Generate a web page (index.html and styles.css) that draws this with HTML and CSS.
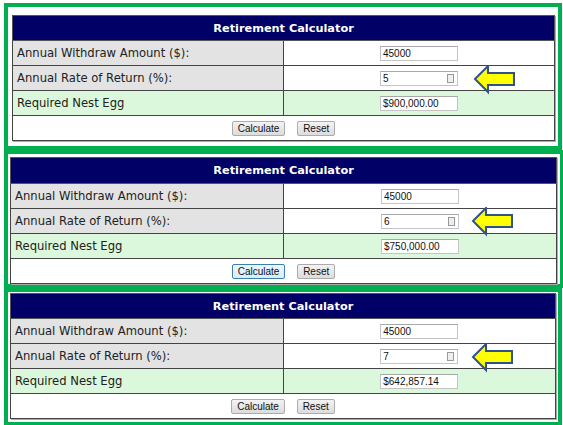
FILE: index.html
```html
<!DOCTYPE html>
<html lang="en">
<head>
    <meta charset="UTF-8">
    <title>Retirement Calculator</title>
    <link rel="stylesheet" href="styles.css">
</head>
<body>

<!-- Three snapshots of the same calculator -->
<div class="panel panel-one">
    <div class="calc">
        <table class="calc-table">
            <tr><th colspan="2">Retirement Calculator</th></tr>
            <tr>
                <td class="label">Annual Withdraw Amount ($):</td>
                <td class="field"><input class="box" type="text" value="45000"></td>
            </tr>
            <tr>
                <td class="label">Annual Rate of Return (%):</td>
                <td class="field"><span class="spin-wrap"><input class="box" type="text" value="5"><span class="spin"></span></span></td>
            </tr>
            <tr class="result">
                <td>Required Nest Egg</td>
                <td class="field"><input class="box" type="text" value="$900,000.00"></td>
            </tr>
            <tr>
                <td colspan="2" class="actions">
                    <button class="btn">Calculate</button>
                    <button class="btn">Reset</button>
                </td>
            </tr>
        </table>
        <svg class="arrow" width="44" height="30" viewBox="0 0 44 30">
            <polygon points="2,14 15,1 15,8 41,8 41,20 15,20 15,27" />
        </svg>
    </div>
</div>

<div class="panel panel-two">
    <div class="calc">
        <table class="calc-table">
            <tr><th colspan="2">Retirement Calculator</th></tr>
            <tr>
                <td class="label">Annual Withdraw Amount ($):</td>
                <td class="field"><input class="box" type="text" value="45000"></td>
            </tr>
            <tr>
                <td class="label">Annual Rate of Return (%):</td>
                <td class="field"><span class="spin-wrap"><input class="box" type="text" value="6"><span class="spin"></span></span></td>
            </tr>
            <tr class="result">
                <td>Required Nest Egg</td>
                <td class="field"><input class="box" type="text" value="$750,000.00"></td>
            </tr>
            <tr>
                <td colspan="2" class="actions">
                    <button class="btn btn-hover">Calculate</button>
                    <button class="btn">Reset</button>
                </td>
            </tr>
        </table>
        <svg class="arrow" width="44" height="30" viewBox="0 0 44 30">
            <polygon points="2,14 15,1 15,8 41,8 41,20 15,20 15,27" />
        </svg>
    </div>
</div>

<div class="panel panel-three">
    <div class="calc">
        <table class="calc-table">
            <tr><th colspan="2">Retirement Calculator</th></tr>
            <tr>
                <td class="label">Annual Withdraw Amount ($):</td>
                <td class="field"><input class="box" type="text" value="45000"></td>
            </tr>
            <tr>
                <td class="label">Annual Rate of Return (%):</td>
                <td class="field"><span class="spin-wrap"><input class="box" type="text" value="7"><span class="spin"></span></span></td>
            </tr>
            <tr class="result">
                <td>Required Nest Egg</td>
                <td class="field"><input class="box" type="text" value="$642,857.14"></td>
            </tr>
            <tr>
                <td colspan="2" class="actions">
                    <button class="btn">Calculate</button>
                    <button class="btn">Reset</button>
                </td>
            </tr>
        </table>
        <svg class="arrow" width="44" height="30" viewBox="0 0 44 30">
            <polygon points="2,14 15,1 15,8 41,8 41,20 15,20 15,27" />
        </svg>
    </div>
</div>

</body>
</html>
```

FILE: styles.css
```css
body {
    margin: 0;
    padding: 3px 0 0 4px;
    background: #fff;
    font-family: 'DejaVu Sans', Verdana, sans-serif;
    color: #222;
}
.panel {
    border: 4px solid #00b050;
}
.panel-one {
    width: 543px;
    padding: 8px 3px 5px 4px;
}
.panel-two {
    width: 547px;
    padding: 3px 3px 0 2px;
}
.panel-three {
    width: 546px;
    padding: 1px 2px 3px 2px;
}
.calc {
    position: relative;
}
.calc-table {
    width: 100%;
    border-collapse: collapse;
    border: 1px solid #555;
    box-shadow: 1px 1px 0 #aaa;
}
.calc-table th {
    height: 24px;
    padding: 0;
    background: #000066;
    color: #fff;
    font-size: 11.3px;
    font-weight: bold;
    border: 1px solid #555;
}
.panel-two .calc-table th {
    height: 25px;
}
.calc-table td {
    height: 24px;
    padding: 0 0 0 4px;
    border: 1px solid #444;
    font-size: 11.6px;
    width: 50%;
}
.calc-table .label {
    background: #e3e3e3;
}
.calc-table .result td {
    background: #dcf8dc;
}
.calc-table .field {
    text-align: center;
    padding: 0;
}
.box {
    width: 72px;
    height: 13px;
    padding: 0 2px;
    margin: 0;
    border: 1px solid #c4c4c4;
    border-top-color: #a8a8a8;
    background: #fff;
    font-family: 'Liberation Sans', Arial, sans-serif;
    font-size: 10px;
    color: #111;
    vertical-align: middle;
}
.spin-wrap {
    position: relative;
    display: inline-block;
    vertical-align: middle;
}
.spin-wrap .box {
    display: block;
}
.spin {
    position: absolute;
    right: 4px;
    top: 3px;
    width: 5px;
    height: 7px;
    border: 1px solid #999;
    background: #eee;
}
.calc-table .actions {
    text-align: center;
    background: #fff;
    padding: 0;
}
.btn {
    height: 15px;
    padding: 0 5px;
    margin: 0 4px;
    font-family: 'Liberation Sans', Arial, sans-serif;
    font-size: 10px;
    color: #111;
    background: linear-gradient(#f3f3f3, #dcdcdc);
    border: 1px solid #acacac;
    border-radius: 2px;
    vertical-align: middle;
}
.btn-hover {
    background: linear-gradient(#eaf6fd, #d7effc);
    border-color: #3c7fb1;
}
.arrow {
    position: absolute;
    left: 461px;
    top: 50px;
}
.arrow polygon {
    fill: #ffff00;
    stroke: #2f528f;
    stroke-width: 2;
    stroke-linejoin: miter;
}
```
